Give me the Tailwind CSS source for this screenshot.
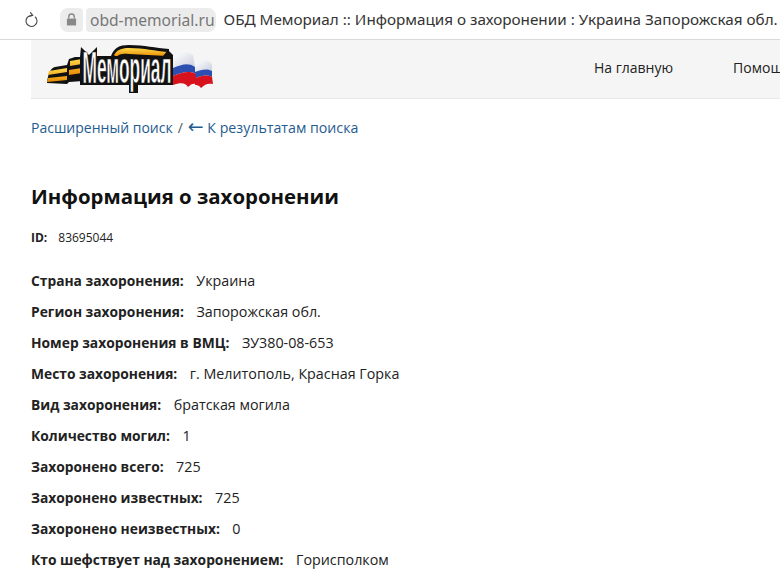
<!DOCTYPE html>
<html lang="ru">
<head>
    <meta charset="UTF-8">
    <title>ОБД Мемориал</title>
    <script src="https://cdn.jsdelivr.net/npm/@tailwindcss/browser@4"></script>
</head>
<body class="bg-white text-[14px] text-[#222] font-['Open_Sans',sans-serif] h-[588px] w-[780px] overflow-hidden">
    <!-- Browser address bar -->
    <div class="h-10 border-b border-[#d9d9d9] flex items-center pl-[25px] whitespace-nowrap overflow-hidden">
        <svg class="w-[14px] h-[16px] text-[#444] shrink-0" viewBox="0 0 14 16" fill="none" stroke="currentColor" stroke-width="1.1">
            <path d="M10 4.7A5.5 5.5 0 1 1 7 3.5"/>
            <path d="M5.2.3 7.7 3.3 4.3 4.4"/>
        </svg>
        <div class="ml-[21px] w-[23px] h-[24px] rounded-l-lg rounded-r-sm bg-[#ececec] flex items-center justify-center shrink-0">
            <svg class="w-[11px] h-[13px] text-[#888]" viewBox="0 0 12 14" fill="currentColor">
                <path d="M1 6h10v7.5H1z"/>
                <path d="M3 6V4a3 3 0 0 1 6 0v2" fill="none" stroke="currentColor" stroke-width="1.5"/>
            </svg>
        </div>
        <div class="ml-[3px] h-[24px] pl-[4px] pr-[1px] rounded-r-lg rounded-l-sm bg-[#ececec] text-[#777] text-[15.6px] leading-[24px] shrink-0 font-['Noto_Sans',sans-serif]">obd-memorial.ru</div>
        <div class="ml-[8px] text-[15.25px] text-[#333] font-['Noto_Sans',sans-serif]">ОБД Мемориал :: Информация о захоронении : Украина Запорожская обл.</div>
    </div>

    <div class="pl-[31px]">
        <!-- Site nav -->
        <nav class="h-[59px] bg-[#f5f5f5] border-b border-[#e7e7e7] flex items-center whitespace-nowrap overflow-hidden">
            <svg class="ml-[14px] w-[170px] h-[52px] shrink-0" viewBox="0 0 170 52">
                <defs>
                    <linearGradient id="gold" x1="0" y1="0" x2="0" y2="1">
                        <stop offset="0" stop-color="#ffd84a"/>
                        <stop offset="1" stop-color="#e88a00"/>
                    </linearGradient>
                    <linearGradient id="white" x1="0" y1="0" x2="1" y2="1">
                        <stop offset="0" stop-color="#ffffff"/>
                        <stop offset="1" stop-color="#c9cede"/>
                    </linearGradient>
                </defs>
                <!-- left ribbon -->
                <path d="M2 40 C3 30 6 25 10 24 L22 22 L24 16 L30 14 L38 14 L38 38 L24 39 L22 41Z" fill="#111"/>
                <path d="M4 28 L22 25 L22 29 L3 32Z M3 35 L22 33 L22 37 L2 39Z" fill="url(#gold)"/>
                <path d="M25 18 L37 16 L37 21 L25 23Z M24 27 L37 25 L37 30 L24 32Z" fill="url(#gold)"/>
                <!-- top ribbon -->
                <path d="M66 13 C69 5 74 2 84 2 C100 2 110 5 124 6 L124 14 L66 14Z" fill="#111"/>
                <path d="M69 12 C72 7 76 5 84 5 C100 5 110 8 122 9 L122 13 L84 11 C78 10 74 11 71 14Z" fill="url(#gold)"/>
                <!-- flags -->
                <path d="M128 13 C134 13 138 6 148 12 L150 24 C143 19 136 22 128 25Z" fill="url(#white)"/>
                <path d="M128 25 C136 22 143 19 150 24 L151 31 C144 27 136 30 128 33Z" fill="#2d4fb0"/>
                <path d="M128 33 C136 30 144 27 151 31 L151 41 C148 40 146 41 143 44 C141 40 136 39 128 42Z" fill="#d8121c"/>
                <path d="M150 20 C155 20 161 14 167 21 L167 28 C161 25 156 27 150 29Z" fill="url(#white)"/>
                <path d="M150 29 C156 27 161 25 167 28 L167 34 C161 31 156 33 151 35Z" fill="#2d4fb0"/>
                <path d="M151 35 C156 33 161 31 167 34 L168 41 C163 40 160 41 156 45 C154 42 152 42 150 42Z" fill="#d8121c"/>
                <!-- wordmark backing -->
                <path d="M35 14 L36 4 L44 12 L52 4 L52 13 L118 13 L123 7 L128 12 L128 42 L93 42 L93 50 L84 50 L84 42 L35 42Z" fill="#111"/>
                <text x="0" y="0" font-family="Liberation Sans, sans-serif" font-weight="700" font-size="30" fill="#fff" stroke="#111" stroke-width="0.5" textLength="89" lengthAdjust="spacingAndGlyphs" transform="translate(37.5 40) scale(1 1.45)">Мемориал</text>
            </svg>
            <a class="ml-[379px] -mt-[3px] text-[14px] text-[#222]">На главную</a>
            <a class="ml-[60px] -mt-[3px] text-[14px] text-[#222]">Помощь</a>
        </nav>

        <!-- Breadcrumbs -->
        <div class="mt-[17px] h-[20px] leading-[20px] text-[14px] text-[#1f5c8f] whitespace-nowrap">
            <a>Расширенный поиск</a><span class="text-[#555] ml-[5px]">/</span><a class="ml-[5px]"><span class="font-['DejaVu_Sans',sans-serif] text-[19px] leading-[20px]">←</span> <span class="text-[14.2px]">К результатам поиска</span></a>
        </div>

        <h1 class="mt-[45px] h-[30px] leading-[30px] text-[20.4px] font-bold text-[#111]">Информация о захоронении</h1>

        <div class="mt-[18px] h-[18px] leading-[18px] text-[12px] text-[#222]"><b>ID:</b><span class="ml-[11px]">83695044</span></div>

        <!-- Burial fields -->
        <div class="mt-[24px] flex flex-col gap-[11px] text-[14.3px] leading-[20px]">
            <div><b class="font-bold text-[13.8px]">Страна захоронения:</b><span class="ml-[12.5px]">Украина</span></div>
            <div><b class="font-bold text-[13.8px]">Регион захоронения:</b><span class="ml-[12.5px]">Запорожская обл.</span></div>
            <div><b class="font-bold text-[13.8px]">Номер захоронения в ВМЦ:</b><span class="ml-[12.5px]">ЗУ380-08-653</span></div>
            <div><b class="font-bold text-[13.8px]">Место захоронения:</b><span class="ml-[12.5px]">г. Мелитополь, Красная Горка</span></div>
            <div><b class="font-bold text-[13.8px]">Вид захоронения:</b><span class="ml-[12.5px]">братская могила</span></div>
            <div><b class="font-bold text-[13.8px]">Количество могил:</b><span class="ml-[12.5px]">1</span></div>
            <div><b class="font-bold text-[13.8px]">Захоронено всего:</b><span class="ml-[12.5px]">725</span></div>
            <div><b class="font-bold text-[13.8px]">Захоронено известных:</b><span class="ml-[12.5px]">725</span></div>
            <div><b class="font-bold text-[13.8px]">Захоронено неизвестных:</b><span class="ml-[12.5px]">0</span></div>
            <div><b class="font-bold text-[13.8px]">Кто шефствует над захоронением:</b><span class="ml-[12.5px]">Горисполком</span></div>
        </div>
    </div>
</body>
</html>
